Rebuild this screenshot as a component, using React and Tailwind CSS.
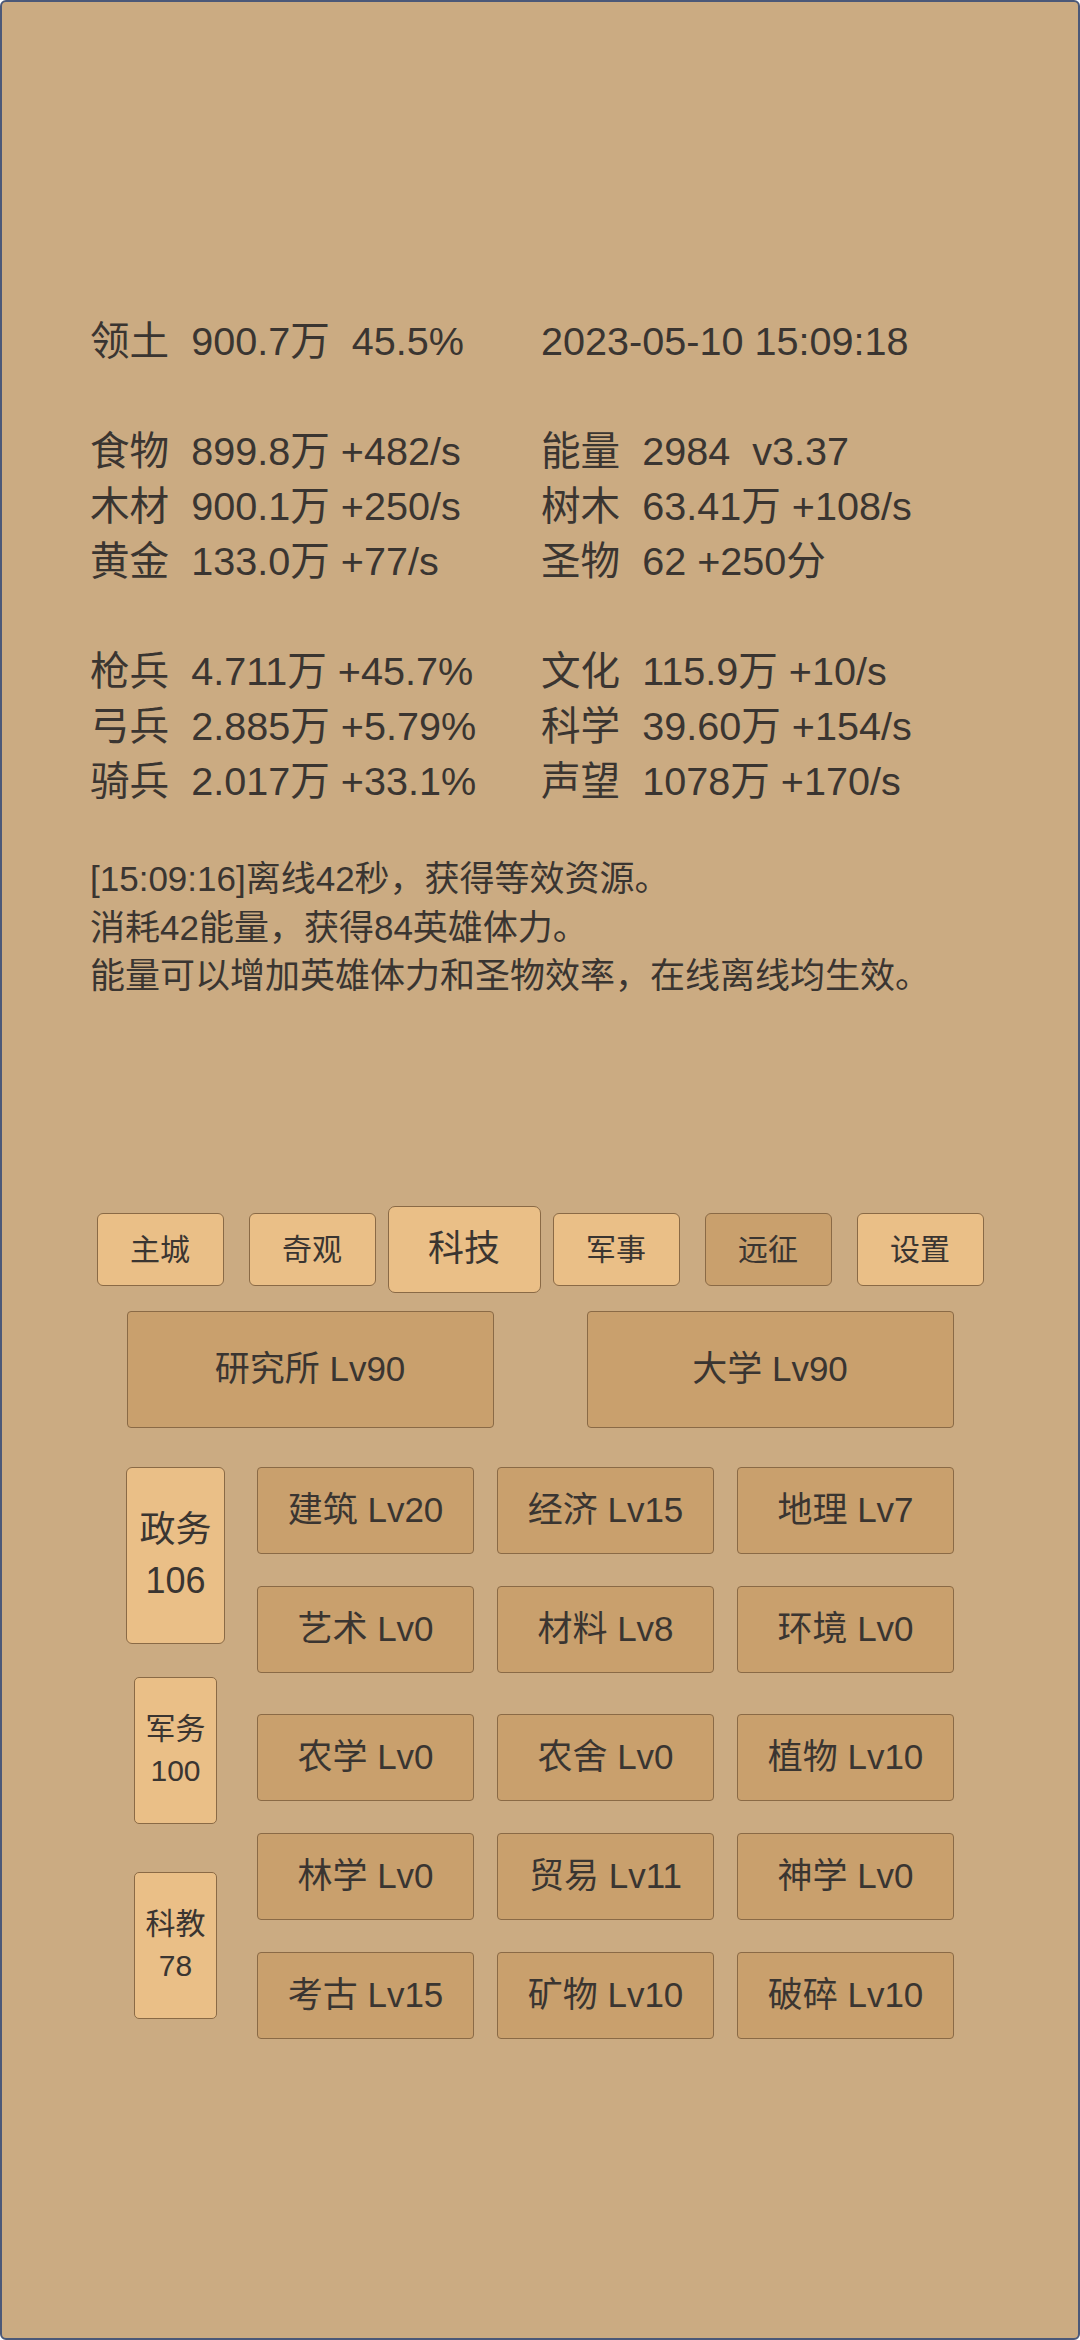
import React from "react";

const FONT = { fontFamily: '"Liberation Sans", "Noto Sans CJK SC", sans-serif' };

const statRows = [
  ["领土  900.7万  45.5%", "2023-05-10 15:09:18"],
  null,
  ["食物  899.8万 +482/s", "能量  2984  v3.37"],
  ["木材  900.1万 +250/s", "树木  63.41万 +108/s"],
  ["黄金  133.0万 +77/s", "圣物  62 +250分"],
  null,
  ["枪兵  4.711万 +45.7%", "文化  115.9万 +10/s"],
  ["弓兵  2.885万 +5.79%", "科学  39.60万 +154/s"],
  ["骑兵  2.017万 +33.1%", "声望  1078万 +170/s"],
];

const tabs = [
  { t: "主城" },
  { t: "奇观" },
  { t: "科技", sel: true },
  { t: "军事" },
  { t: "远征", dark: true },
  { t: "设置" },
];

const cells = [
  ["建筑 Lv20", "经济 Lv15", "地理 Lv7"],
  ["艺术 Lv0", "材料 Lv8", "环境 Lv0"],
  ["农学 Lv0", "农舍 Lv0", "植物 Lv10"],
  ["林学 Lv0", "贸易 Lv11", "神学 Lv0"],
  ["考古 Lv15", "矿物 Lv10", "破碎 Lv10"],
];
const rowMargins = ["mt-0", "mt-[32px]", "mt-[41px]", "mt-[32px]", "mt-[32px]"];

function Cell({ children }) {
  return (
    <div className="w-[217px] h-[87px] flex items-center justify-center bg-[#c9a06d] border border-[#8a6a46] rounded-[4px] text-[35px] text-[#3a3531]">
      {children}
    </div>
  );
}

export default function App() {
  return (
    <div
      style={FONT}
      className="w-[1080px] h-[2340px] bg-[#cbab82] border-2 border-[#4b5878] rounded-[6px] text-[#3a3531] overflow-hidden"
    >
      {/* stats */}
      <div className="pt-[312px] pl-[88px]">
        <div className="grid grid-cols-[451px_auto] text-[39.6px] leading-[55px] whitespace-pre">
          {statRows.map((r, i) =>
            r ? (
              <React.Fragment key={i}>
                <div>{r[0]}</div>
                <div>{r[1]}</div>
              </React.Fragment>
            ) : (
              <div key={i} className="col-span-2 h-[55px]" />
            )
          )}
        </div>
        <div className="mt-[46px] text-[35px] leading-[48.5px]">
          <div>[15:09:16]离线42秒，获得等效资源。</div>
          <div>消耗42能量，获得84英雄体力。</div>
          <div>能量可以增加英雄体力和圣物效率，在线离线均生效。</div>
        </div>
      </div>

      {/* tabs */}
      <div className="mt-[205px] flex items-center justify-center gap-[25px] h-[87px]">
        {tabs.map((tb) =>
          tb.sel ? (
            <div
              key={tb.t}
              className="w-[153px] h-[87px] -mx-[13px] flex items-center justify-center bg-[#eabf87] border border-[#8a6a46] rounded-[7px] text-[36px]"
            >
              {tb.t}
            </div>
          ) : (
            <div
              key={tb.t}
              className={
                "w-[127px] h-[73px] flex items-center justify-center border border-[#8a6a46] rounded-[6px] text-[30px] " +
                (tb.dark ? "bg-[#c9a06d]" : "bg-[#eabf87]")
              }
            >
              {tb.t}
            </div>
          )
        )}
      </div>

      {/* big buttons */}
      <div className="mt-[18px] flex justify-center gap-[93px]">
        <div className="w-[367px] h-[117px] flex items-center justify-center bg-[#c9a06d] border border-[#8a6a46] rounded-[4px] text-[35px]">
          研究所 Lv90
        </div>
        <div className="w-[367px] h-[117px] flex items-center justify-center bg-[#c9a06d] border border-[#8a6a46] rounded-[4px] text-[35px]">
          大学 Lv90
        </div>
      </div>

      {/* tech grid */}
      <div className="mt-[39px] flex justify-center gap-[32px]">
        <div className="w-[99px] flex flex-col items-center">
          <div className="w-[99px] h-[177px] flex flex-col items-center justify-center bg-[#eabf87] border border-[#8a6a46] rounded-[6px] text-[36px] leading-[51px]">
            <div>政务</div>
            <div>106</div>
          </div>
          <div className="mt-[33px] w-[83px] h-[147px] flex flex-col items-center justify-center bg-[#eabf87] border border-[#8a6a46] rounded-[5px] text-[30px] leading-[42px]">
            <div>军务</div>
            <div>100</div>
          </div>
          <div className="mt-[48px] w-[83px] h-[147px] flex flex-col items-center justify-center bg-[#eabf87] border border-[#8a6a46] rounded-[5px] text-[30px] leading-[42px]">
            <div>科教</div>
            <div>78</div>
          </div>
        </div>
        <div className="flex flex-col">
          {cells.map((row, i) => (
            <div key={i} className={"flex gap-[23px] " + rowMargins[i]}>
              {row.map((c) => (
                <Cell key={c}>{c}</Cell>
              ))}
            </div>
          ))}
        </div>
      </div>
    </div>
  );
}
